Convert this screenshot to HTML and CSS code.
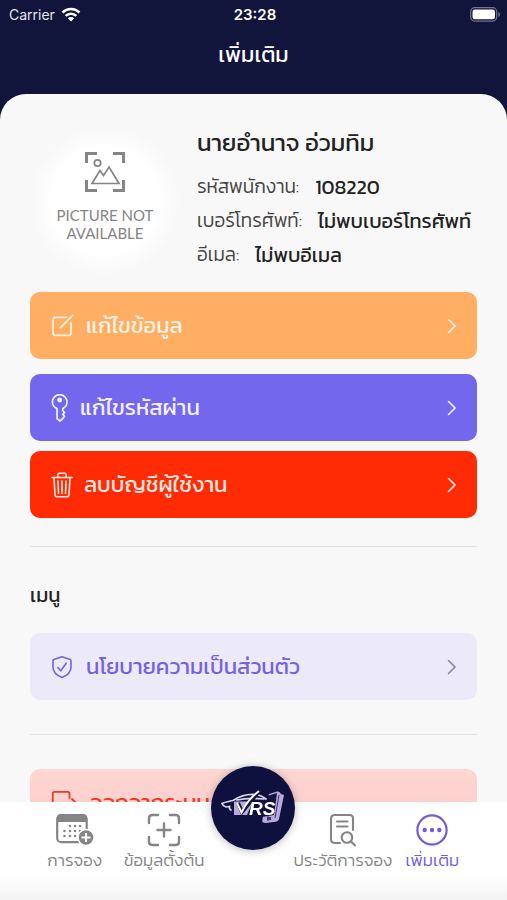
FILE: index.html
```html
<!DOCTYPE html>
<html lang="th">
<head>
<meta charset="utf-8">
<meta name="viewport" content="width=device-width, initial-scale=1">
<title>เพิ่มเติม</title>
<link rel="stylesheet" href="styles.css">
</head>
<body>
<header class="header">
  <div class="status">
    <span class="carrier">Carrier
      <svg width="20" height="15" viewBox="0 0 20 15" fill="none" stroke="#fff" stroke-width="2.6" aria-hidden="true"><path d="M1.500 5.500a12.200 12.200 0 0 1 17 0M4.700 8.900a7.600 7.600 0 0 1 10.600 0"/><path d="M10 14.500 6.800 11.200a4.600 4.600 0 0 1 6.400 0Z" fill="#fff" stroke="none"/></svg>
    </span>
    <time class="clock">23:28</time>
    <svg class="battery" width="31" height="15" viewBox="0 0 31 15" aria-hidden="true"><rect x=".7" y=".7" width="26" height="13.400" rx="4" fill="none" stroke="#73758b" stroke-width="1.200"/><rect x="2.500" y="2.500" width="22.500" height="9.800" rx="2.400" fill="#fff"/><path d="M28.300 5v5c2.200-.8 2.200-4.200 0-5Z" fill="#73758b"/></svg>
  </div>
  <h1 class="title">เพิ่มเติม</h1>
</header>
<main class="sheet">
  <section class="profile">
    <div class="avatar">
      <svg width="42" height="42" viewBox="0 0 42 42" fill="none" stroke="#858585" aria-hidden="true"><path stroke-width="3" d="M2.500 12V2.500H13M29 2.500h10.500V12M2.500 29v10.500H13M29 39.500h10.500V29"/><circle cx="13.500" cy="12" r="3.200" stroke-width="1.700"/><path stroke-width="1.700" d="M8 32.500 16 19.500l3.500 5L25 16l10 16.500Z"/></svg>
      <span>PICTURE NOT AVAILABLE</span>
    </div>
    <div class="info">
      <h2 class="name">นายอำนาจ อ่วมทิม</h2>
      <dl class="details">
        <div><dt>รหัสพนักงาน:</dt><dd>108220</dd></div>
        <div><dt>เบอร์โทรศัพท์:</dt><dd>ไม่พบเบอร์โทรศัพท์</dd></div>
        <div><dt>อีเมล:</dt><dd>ไม่พบอีเมล</dd></div>
      </dl>
    </div>
  </section>
  <div class="actions">
    <button type="button" class="row edit">
      <svg width="24" height="24" viewBox="0 0 24 24" fill="none" stroke="currentColor" stroke-width="1.700" stroke-linecap="round" stroke-linejoin="round" aria-hidden="true"><path d="M15.500 3.300H4.500a2.500 2.500 0 0 0-2.500 2.500v13a2.500 2.500 0 0 0 2.500 2.500h13a2.500 2.500 0 0 0 2.500-2.500V9"/><path d="m9.500 13.700 10.700-10.900M21.600 1.500l.1-.1"/></svg>
      <span>แก้ไขข้อมูล</span>
      <svg class="chev" width="10" height="16" viewBox="0 0 10 16" aria-hidden="true"><path d="m1.500 1.500 6.500 6.500-6.500 6.500"/></svg>
    </button>
    <button type="button" class="row password">
      <svg width="18" height="28" viewBox="0 0 18 28" fill="none" stroke="currentColor" stroke-width="1.700" stroke-linejoin="round" aria-hidden="true"><path d="M6 14.500C3.300 13.300 1.400 10.900 1.400 8a7.300 7.300 0 0 1 14.600 0c0 2.900-1.500 5.300-4.200 6.500v2.200l1.700 1.800-1.700 1.900 1.700 1.900-1.700 2.200L9 27l-3-2.500Z"/><circle cx="8.700" cy="6" r="1.600" fill="currentColor"/></svg>
      <span>แก้ไขรหัสผ่าน</span>
      <svg class="chev" width="10" height="16" viewBox="0 0 10 16" aria-hidden="true"><path d="m1.500 1.500 6.500 6.500-6.500 6.500"/></svg>
    </button>
    <button type="button" class="row delete">
      <svg width="22" height="26" viewBox="0 0 22 26" fill="none" stroke="currentColor" stroke-width="1.600" stroke-linecap="round" stroke-linejoin="round" aria-hidden="true"><path d="M1 5.500h20M6.800 5.200V3c0-1 .7-1.700 1.700-1.700h5c1 0 1.700.7 1.700 1.700v2.200M3 6l1 16.700c.1 1.300.9 2.100 2.200 2.100h9.600c1.300 0 2.100-.8 2.200-2.100L19 6M7 9l.5 12.500M11 9v12.500M15 9l-.5 12.500"/></svg>
      <span>ลบบัญชีผู้ใช้งาน</span>
      <svg class="chev" width="10" height="16" viewBox="0 0 10 16" aria-hidden="true"><path d="m1.500 1.500 6.500 6.500-6.500 6.500"/></svg>
    </button>
  </div>
  <hr>
  <h2 class="section">เมนู</h2>
  <button type="button" class="row policy">
    <svg width="24" height="24" viewBox="0 0 24 24" fill="none" stroke="currentColor" stroke-width="1.600" stroke-linecap="round" stroke-linejoin="round" aria-hidden="true"><path d="M11 1.800 2.800 4.500C2.200 4.800 2 5.200 2 6v6c0 5 4 8.500 9 10.500 5-2 9-5.500 9-10.500V6c0-.8-.2-1.200-.8-1.500Z"/><path d="m6.800 12.500 3 3.300 5.400-7.600"/></svg>
    <span>นโยบายความเป็นส่วนตัว</span>
    <svg class="chev" width="10" height="16" viewBox="0 0 10 16" aria-hidden="true"><path d="m1.500 1.500 6.500 6.500-6.500 6.500"/></svg>
  </button>
  <hr class="wide">
  <button type="button" class="row logout">
    <svg width="28" height="26" viewBox="0 0 28 26" fill="none" stroke="currentColor" stroke-width="1.800" stroke-linecap="round" stroke-linejoin="round" aria-hidden="true"><path d="M18.500 8V3.500c0-1-.7-1.700-1.700-1.700H3.500c-1 0-1.700.7-1.700 1.700v18c0 1 .7 1.700 1.700 1.700h13.300c1 0 1.700-.7 1.700-1.700V18M10 13h15M21 9l4 4-4 4"/></svg>
    <span>ออกจากระบบ</span>
  </button>
</main>
<nav class="tabs">
  <a class="tab" href="#booking">
    <svg width="38" height="34" viewBox="0 0 38 34" aria-hidden="true"><rect x="1.200" y="2.200" width="29.500" height="27" rx="4" fill="none" stroke="#858585" stroke-width="2.200"/><path d="M1 9V5c0-2.500 1.500-4 4-4h22c2.500 0 4 1.500 4 4v4Z" fill="#858585"/><g fill="#858585"><circle cx="14" cy="13" r="1.300"/><circle cx="19" cy="13" r="1.300"/><circle cx="24" cy="13" r="1.300"/><circle cx="8.500" cy="18" r="1.300"/><circle cx="14" cy="18" r="1.300"/><circle cx="19" cy="18" r="1.300"/><circle cx="24" cy="18" r="1.300"/><circle cx="8.500" cy="23" r="1.300"/><circle cx="14" cy="23" r="1.300"/><circle cx="19" cy="23" r="1.300"/></g><circle cx="30" cy="24.500" r="8" fill="#858585" stroke="#fff" stroke-width="1.500"/><path d="M25.500 24.500h9M30 20v9" stroke="#fff" stroke-width="2"/></svg>
    <span>การจอง</span>
  </a>
  <a class="tab" href="#data">
    <svg width="34" height="34" viewBox="0 0 34 34" fill="none" stroke="#858585" stroke-width="2.400" stroke-linecap="round" aria-hidden="true"><path d="M2 10V5.500C2 3.500 3.500 2 5.500 2H11M23 2h5.500c2 0 3.500 1.500 3.500 3.500V10M2 24v4.500c0 2 1.500 3.500 3.500 3.500H11M23 32h5.500c2 0 3.500-1.500 3.500-3.500V24M10.500 17h13M17 10.500v13"/></svg>
    <span>ข้อมูลตั้งต้น</span>
  </a>
  <a class="brand" href="#home" aria-label="VRS">
    <svg width="66" height="36" viewBox="0 0 66 36" aria-hidden="true">
      <path d="m49 4 8-2.500c2-.4 3 .5 4 2.500l3 1-5 24c-.4 1.500-1.500 2.500-3.500 2.700L46 33c-2 .2-4-.5-3.700-2.200L43 26" fill="#b9aadd"/><path d="m47 6 10-3-3 22-12 2V9Z" fill="#11153c"/><path d="m59 5-4 23" stroke="#11153c" stroke-width=".8"/><path d="M48 26.500v4M50 27v3" stroke="#11153c" stroke-width="1.500"/>
      <path d="M11 20c-1.500-.8-2-2-1.500-3.500L6 17c-2-.6-3.500-2-4-3.500C5 12 9 11.500 13 10.500 20 6 27 4 35 4.500c5 .5 8 2 11 4.500M17 10c9-2 17-2 27-1" fill="none" stroke="#d9d3ed" stroke-width="1.700" stroke-linecap="round"/>
      <path d="M14 11.500h19L27 25H14Z" fill="#b9aadd"/><path d="m18 13 4 9L39 1" fill="none" stroke="#11153c" stroke-width="4"/><path d="m17 13 4.500 9.500C25 15 31 7 39 1" fill="none" stroke="#fff" stroke-width="2"/>
      <text x="29" y="25" class="logo-text">RS</text>
    </svg>
  </a>
  <a class="tab" href="#history">
    <svg width="28" height="34" viewBox="0 0 28 34" fill="none" stroke="#858585" stroke-width="2.100" stroke-linecap="round" stroke-linejoin="round" aria-hidden="true"><path d="M11 30H5.500C3.500 30 2 28.500 2 26.500v-21C2 3.500 3.500 2 5.500 2h15C22.500 2 24 3.500 24 5.500V17M8 8.500h10.500M8 13.500h10.500"/><circle cx="18" cy="24.500" r="5.300"/><path d="m22 28.500 4 4"/></svg>
    <span>ประวัติการจอง</span>
  </a>
  <a class="tab active" href="#more" aria-current="page">
    <svg width="34" height="34" viewBox="0 0 34 34" aria-hidden="true"><circle cx="17" cy="17" r="14.600" fill="none" stroke="#6e5be0" stroke-width="2.200"/><g fill="#6e5be0"><circle cx="9.700" cy="17" r="2.200"/><circle cx="17" cy="17" r="2.200"/><circle cx="24.300" cy="17" r="2.200"/></g></svg>
    <span>เพิ่มเติม</span>
  </a>
</nav>
</body>
</html>
```
FILE: styles.css
```css
* { box-sizing: border-box; }
body {
  margin: 0;
  height: 100vh;
  display: flex;
  flex-direction: column;
  overflow: hidden;
  background: #11153c;
  color: #222;
  font-family: Kanit, Prompt, "Noto Sans Thai", "Noto Sans", sans-serif;
}
h1, h2, dl, dd { margin: 0; font-weight: 400; }
.header { flex: none; height: 94px; color: #fff; }
.status {
  display: grid;
  grid-template-columns: 1fr auto 1fr;
  align-items: center;
  height: 28px;
  padding: 0 6px 0 9px;
  font-family: Inter, sans-serif;
  font-size: 15px;
}
.carrier { display: flex; align-items: center; gap: 6px; color: #e3e4ec; font-size: 14px; }
.clock { font-weight: 600; }
.battery { justify-self: end; }
.title { font-size: 22px; line-height: 54px; text-align: center; }
.sheet {
  flex: 1;
  min-height: 0;
  overflow: hidden auto;
  scrollbar-width: none;
  padding: 32px 30px 0;
  border-radius: 26px 26px 0 0;
  background: #f8f8f8;
}
.profile { display: flex; gap: 17px; height: 166px; }
.avatar {
  flex: none;
  width: 150px;
  height: 150px;
  display: flex;
  flex-direction: column;
  align-items: center;
  gap: 13px;
  padding-top: 25px;
  border-radius: 50%;
  background: radial-gradient(closest-side, #fff 70%, #f8f8f8);
  color: #858585;
  font: 15px/18px Lato, sans-serif;
  text-align: center;
}
.avatar span { width: 110px; }
.name { font-size: 24px; line-height: 34px; }
.details { padding-top: 10px; font-size: 19px; line-height: 34px; white-space: nowrap; }
.details div { display: flex; gap: 16px; }
.details dt { color: #444; font-weight: 300; }
.details dd { font-size: 20px; }
.actions { display: flex; flex-direction: column; gap: 10px; }
.row {
  display: flex;
  align-items: center;
  flex: none;
  gap: 11px;
  width: 100%;
  height: 67px;
  padding: 0 20px 0 21px;
  border: 0;
  border-radius: 10px;
  color: #fff3e5;
  font: 400 22px/28px Kanit, Prompt, "Noto Sans Thai", "Noto Sans", sans-serif;
}
.row svg { flex: none; }
.row .chev { margin-left: auto; fill: none; stroke: currentColor; stroke-width: 1.6; stroke-linecap: round; }
.edit { margin-bottom: 5px; background: #ffae63; }
.password { background: #7367ee; color: #f3f0ff; }
.delete { background: #ff2b05; color: #ffe9e2; }
.policy { background: #ece9f8; color: #7562df; }
.policy .chev { color: #8c8a99; }
.logout { background: linear-gradient(#ffd6d1, #f8caca); color: #f03a24; }
hr { margin: 28px 0 34px; border: 0; border-top: 1px solid #e4e4e4; }
.wide { margin-top: 34px; }
.section { margin-bottom: 24px; font-size: 20px; line-height: 28px; }
.tabs {
  flex: none;
  display: grid;
  grid-template-columns: repeat(5, minmax(0, 1fr));
  height: 98px;
  padding: 11px 30px 0;
  background: linear-gradient(#fff 75%, #f3f3f3);
}
.tab {
  display: flex;
  flex-direction: column;
  align-items: center;
  color: #858585;
  font-size: 17px;
  font-weight: 300;
  line-height: 26px;
  text-decoration: none;
  white-space: nowrap;
}
.active { color: #6e5be0; }
.brand {
  display: grid;
  place-items: center;
  justify-self: center;
  width: 84px;
  height: 84px;
  margin-top: -47px;
  border-radius: 50%;
  background: #0e103d;
  box-shadow: 0 1px 8px #0004;
  z-index: 1;
}
.logo-text { fill: #fff; font: italic 700 19px "Liberation Sans", sans-serif; }
```
